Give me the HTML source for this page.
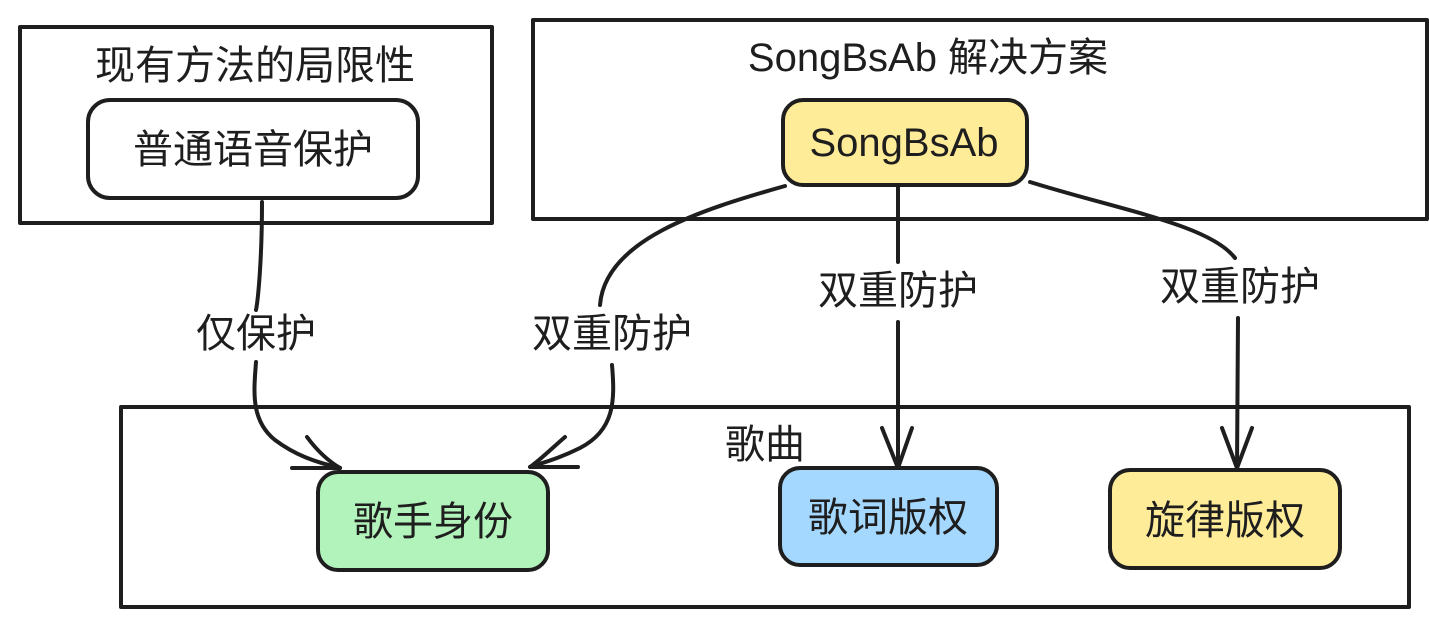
<!DOCTYPE html>
<html><head><meta charset="utf-8"><style>
html,body{margin:0;padding:0;background:#fff;}
svg{display:block}
text{font-family:"Liberation Sans","Noto Sans CJK SC",sans-serif;fill:#1e1e1e;}
</style></head><body>
<svg width="1429" height="627" viewBox="0 0 1429 627" xmlns="http://www.w3.org/2000/svg">
<g fill="none" stroke="#1e1e1e" stroke-width="4" stroke-linecap="round" stroke-linejoin="round">
<rect x="20" y="27" width="472" height="196"/>
<rect x="533" y="20" width="894" height="199"/>
<rect x="121" y="407" width="1288" height="200"/>
<rect x="88" y="100" width="330" height="98" rx="22" fill="#fff"/>
<rect x="783" y="100" width="244" height="85" rx="20" fill="#ffec99"/>
<rect x="318" y="472" width="230" height="98" rx="20" fill="#b2f2bb"/>
<rect x="780" y="468" width="217" height="97" rx="20" fill="#a5d8ff"/>
<rect x="1110" y="470" width="230" height="98" rx="20" fill="#ffec99"/>
<path d="M262 202 C262 260 258 300 256 310 M256 362 C254 390 250 420 275 440 C295 455 315 462 340 468"/>
<path d="M307 437 C318 452 330 462 340 468 L292 468"/>
<path d="M785 186 C700 210 605 240 600 305 M612 365 C615 400 615 430 580 448 C560 458 545 462 530 467"/>
<path d="M565 437 C550 450 540 460 530 467 L578 467"/>
<path d="M898 187 L898 262 M898 322 L898 468"/>
<path d="M882 428 L898 468 L912 428"/>
<path d="M1030 182 C1120 210 1210 225 1235 258 M1238 318 L1237 468"/>
<path d="M1222 428 L1237 468 L1252 428"/>
</g>
<g font-size="40" text-anchor="middle">
<text x="255" y="79">现有方法的局限性</text>
<text x="253" y="163">普通语音保护</text>
<text x="928" y="71">SongBsAb 解决方案</text>
<text x="904" y="156">SongBsAb</text>
<text x="765" y="458">歌曲</text>
<text x="433" y="535">歌手身份</text>
<text x="888" y="531">歌词版权</text>
<text x="1225" y="534">旋律版权</text>
<text x="256" y="347">仅保护</text>
<text x="612" y="347">双重防护</text>
<text x="898" y="304">双重防护</text>
<text x="1240" y="300">双重防护</text>
</g>
</svg>
</body></html>
